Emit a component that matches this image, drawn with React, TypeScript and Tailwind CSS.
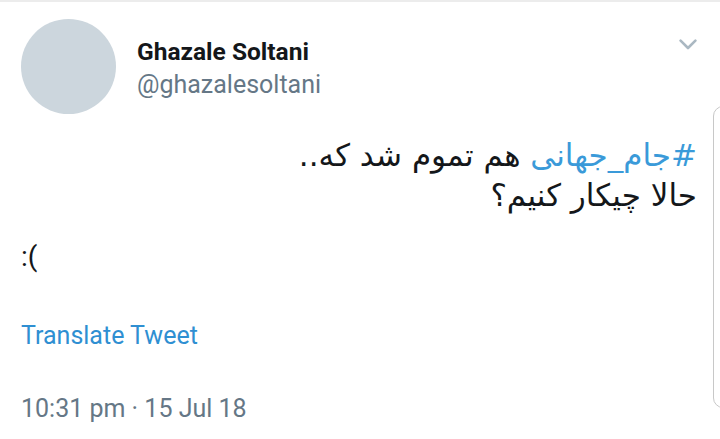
import React from 'react';

function ChevronDown() {
  return (
    <svg width="18" height="11" viewBox="0 0 18 11" fill="none">
      <path d="M1.6 1.6L9 9l7.4-7.4" stroke="#aab8c2" strokeWidth="2.6" strokeLinecap="round" strokeLinejoin="round" />
    </svg>
  );
}

function App() {
  return (
    <div className="relative w-[720px] h-[439px] overflow-hidden bg-white border-t-2 border-[#ececec] font-['Roboto',sans-serif]">
      {/* edge of the next card */}
      <div className="absolute left-[713px] top-[104px] w-[20px] h-[302px] border border-[#c8c8c8] rounded-[10px]" />

      <div className="pl-[21px] pr-[22px] pt-[17px]">
        <div className="flex items-start">
          <div className="w-[95px] h-[95px] rounded-full bg-[#ccd6dd] shrink-0" />
          <div className="ml-[21px] pt-[19px] flex-1">
            <div className="text-[24.5px] leading-[28px] font-bold text-[#14171a]">Ghazale Soltani</div>
            <div className="text-[25px] leading-[30px] mt-[4px] text-[#657786]">@ghazalesoltani</div>
          </div>
          <div className="pt-[20px] pr-[1px]">
            <ChevronDown />
          </div>
        </div>

        <div dir="rtl" className="mt-[21px] pr-[1px] text-[31px] leading-[40px] text-[#14171a] font-['DejaVu_Sans',sans-serif]">
          <div>
            <span className="text-[#3a9ad9]">#جام_جهانی</span> هم تموم شد که..
          </div>
          <div>حالا چیکار کنیم؟</div>
        </div>

        <div dir="ltr" className="mt-[22px] text-[28px] leading-[40px] text-[#14171a]">:(</div>

        <div className="mt-[44px] text-[25px] leading-[30px] text-[#2f8fd2]">Translate Tweet</div>

        <div className="mt-[43px] text-[25px] leading-[30px] text-[#657786]">10:31 pm · 15 Jul 18</div>
      </div>
    </div>
  );
}

export default App;
